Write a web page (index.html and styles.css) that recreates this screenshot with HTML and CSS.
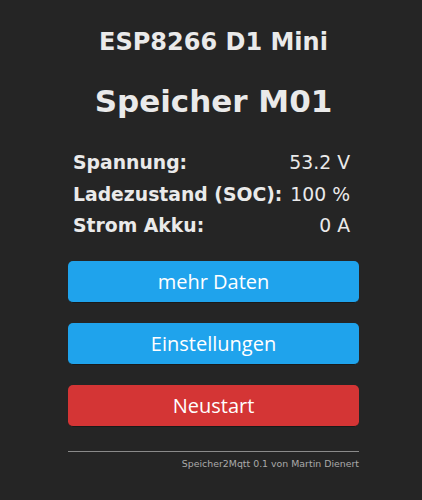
FILE: index.html
```html
<!DOCTYPE html>
<html lang="de">
<head>
<meta charset="utf-8">
<title>Speicher M01</title>
<link rel="stylesheet" href="styles.css">
</head>
<body>
<div class="page">
  <h3 class="module">ESP8266 D1 Mini</h3>
  <h2 class="device">Speicher M01</h2>
  <table class="info">
    <tr><th>Spannung:</th><td>53.2 V</td></tr>
    <tr><th>Ladezustand (SOC):</th><td>100 %</td></tr>
    <tr><th>Strom Akku:</th><td>0 A</td></tr>
  </table>
  <div class="buttons">
    <button class="btn">mehr Daten</button>
    <button class="btn">Einstellungen</button>
    <button class="btn btn-red">Neustart</button>
  </div>
  <hr class="rule">
  <div class="footer">Speicher2Mqtt 0.1 von Martin Dienert</div>
</div>
</body>
</html>
```
FILE: styles.css
```css
html, body {
  background: #252525;
}
body {
  margin: 0 3px 0 8px;
  color: #eaeaea;
  font-family: "DejaVu Sans", sans-serif;
}
.page {
  width: 291px;
  margin: 0 auto;
  padding-top: 29px;
}
.module {
  margin: 0;
  text-align: center;
  font-size: 24px;
  line-height: 27px;
  font-weight: bold;
}
.device {
  margin: 28px 0 0;
  text-align: center;
  font-size: 31px;
  line-height: 35px;
  font-weight: bold;
}
.info {
  width: 100%;
  margin-top: 28px;
  border-collapse: collapse;
  font-size: 18.8px;
}
.info th {
  text-align: left;
  font-weight: bold;
  padding: 0 0 0 5px;
  height: 31.5px;
  white-space: nowrap;
}
.info td {
  text-align: right;
  padding: 0 9px 0 0;
  white-space: nowrap;
}
.buttons {
  display: flex;
  flex-direction: column;
  gap: 20px;
  margin-top: 19px;
}
.btn {
  display: block;
  width: 100%;
  height: 42px;
  border: 0;
  border-bottom: 1px solid #1a1a1a;
  border-radius: 5px;
  background: #1fa3ec;
  color: #fff;
  font-family: "Open Sans", "Noto Sans", sans-serif;
  font-size: 20px;
  padding: 0;
}
.btn-red {
  background: #d43535;
}
.rule {
  margin: 24px 0 0;
  border: 0;
  border-top: 1px solid #8a8a8a;
  height: 0;
}
.footer {
  margin-top: 6px;
  text-align: right;
  font-size: 9.4px;
  color: #aaaaaa;
}
```
